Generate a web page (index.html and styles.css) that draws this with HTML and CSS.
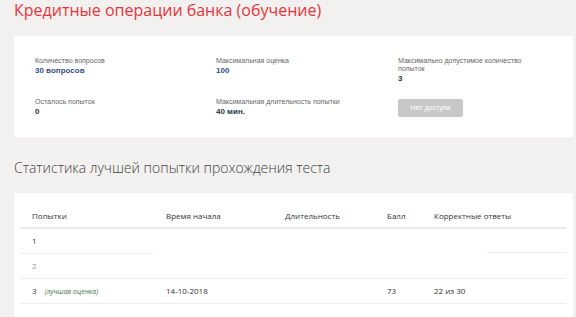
FILE: index.html
```html
<!DOCTYPE html>
<html>
<head>
  <link rel="stylesheet" href="styles.css">
</head>
<body>
<div class="page">
  <h1 class="title">Кредитные операции банка (обучение)</h1>

  <div class="card info">
    <div class="cell">
      <div class="label">Количество вопросов</div>
      <div class="value blue">30 вопросов</div>
    </div>
    <div class="cell">
      <div class="label">Максимальная оценка</div>
      <div class="value blue">100</div>
    </div>
    <div class="cell narrow">
      <div class="label">Максимально допустимое количество попыток</div>
      <div class="value">3</div>
    </div>
    <div class="cell second">
      <div class="label">Осталось попыток</div>
      <div class="value">0</div>
    </div>
    <div class="cell second">
      <div class="label">Максимальная длительность попытки</div>
      <div class="value navy">40 мин.</div>
    </div>
    <div class="cell">
      <button class="btn">Нет доступа</button>
    </div>
  </div>

  <h2 class="subtitle">Статистика лучшей попытки прохождения теста</h2>

  <div class="card stats">
    <table class="table">
      <thead>
        <tr>
          <th class="c1">Попытки</th>
          <th class="c2">Время начала</th>
          <th class="c3">Длительность</th>
          <th class="c4">Балл</th>
          <th>Корректные ответы</th>
        </tr>
      </thead>
      <tbody>
        <tr class="broken">
          <td>1</td><td></td><td></td><td></td><td></td>
        </tr>
        <tr>
          <td class="muted">2</td><td></td><td></td><td></td><td></td>
        </tr>
        <tr>
          <td>3 <span class="best">(лучшая оценка)</span></td>
          <td>14-10-2018</td>
          <td></td>
          <td>73</td>
          <td>22 из 30</td>
        </tr>
      </tbody>
    </table>
  </div>
</div>
</body>
</html>
```

FILE: styles.css
```css
* {
  box-sizing: border-box;
}
body {
  margin: 0;
  background: #f2f1ef;
  font-family: "Open Sans", "Liberation Sans", sans-serif;
  color: #333;
}
.page {
  padding: 0 3px 0 14px;
}
.title {
  margin: 0;
  font-size: 16px;
  line-height: 20px;
  font-weight: 500;
  color: #e8343c;
}
.card {
  background: #fff;
}
.info {
  margin-top: 16px;
  height: 101px;
  padding: 21px 0 0 21px;
  display: grid;
  grid-template-columns: 181px 182px 1fr;
  grid-template-rows: 39px auto;
  font-family: "Liberation Sans", Arial, sans-serif;
}
.label {
  font-size: 7px;
  line-height: 8px;
  color: #666;
}
.narrow .label {
  width: 135px;
}
.value {
  font-size: 8px;
  line-height: 12px;
  font-weight: bold;
  color: #333;
}
.value.blue {
  color: #34508a;
}
.value.navy {
  color: #2c3550;
}
.second {
  padding-top: 2px;
}
.btn {
  width: 65px;
  height: 18px;
  margin-top: 1px;
  border: 0;
  border-radius: 2px;
  background: #c8c8c8;
  color: #fff;
  font-family: "Liberation Sans", Arial, sans-serif;
  font-size: 7px;
  padding: 0;
}
.subtitle {
  margin: 0;
  padding: 21px 0 16px;
  font-size: 14px;
  line-height: 19px;
  font-weight: 300;
  color: #444;
}
.stats {
  padding: 11px 7px 20px 6px;
}
.table {
  width: 100%;
  border-collapse: collapse;
  font-size: 8px;
}
.table th {
  text-align: left;
  font-weight: 400;
  padding: 5px 12px 5px;
  height: 24px;
  border-bottom: 2px solid #ebebeb;
}
.table td {
  padding: 0 12px;
  height: 25px;
  border-bottom: 1px solid #eee;
}
.c1 { width: 134px; }
.c2 { width: 119px; }
.c3 { width: 102px; }
.c4 { width: 47px; }
.broken td {
  border-bottom-color: transparent;
}
.broken td:first-child {
  border-bottom-color: #eee;
}
.broken td:last-child {
  background: linear-gradient(#eee, #eee) no-repeat right bottom / 80px 1px;
}
.muted {
  color: #999;
}
.best {
  margin-left: 6px;
  font-style: italic;
  color: #3a7a3a;
  font-size: 7px;
}
```
